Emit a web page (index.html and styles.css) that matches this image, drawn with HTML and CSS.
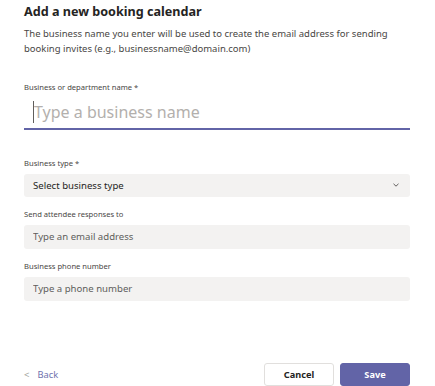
FILE: index.html
```html
<!DOCTYPE html>
<html lang="en">

<head>
  <meta charset="UTF-8">
  <meta name="viewport" content="width=device-width, initial-scale=1.0">
  <title>Add a new booking calendar</title>
  <link rel="stylesheet" href="styles.css">
</head>

<body>
  <div class="dialog">
    <header>
      <h1>Add a new booking calendar</h1>
      <p class="intro">The business name you enter will be used to create the email address for sending booking invites (e.g., businessname@domain.com)</p>
    </header>
    <main>
      <div class="field field-name">
        <label for="business-name">Business or department name *</label>
        <div class="name-input">
          <span class="caret"></span>
          <input id="business-name" type="text" placeholder="Type a business name">
        </div>
      </div>
      <div class="field">
        <label for="business-type">Business type *</label>
        <div class="box select">
          <span>Select business type</span>
          <svg width="6" height="4" viewBox="0 0 6 4"><path d="M0.5 0.8l2.5 2.4 2.5-2.4" fill="none" stroke="#605e5c" stroke-width="1"/></svg>
        </div>
      </div>
      <div class="field">
        <label for="email">Send attendee responses to</label>
        <input class="box" id="email" type="text" placeholder="Type an email address">
      </div>
      <div class="field">
        <label for="phone">Business phone number</label>
        <input class="box" id="phone" type="text" placeholder="Type a phone number">
      </div>
    </main>
    <footer>
      <a class="back" href="#"><span class="chev">&lt;</span>Back</a>
      <div class="actions">
        <button class="cancel">Cancel</button>
        <button class="save">Save</button>
      </div>
    </footer>
  </div>
</body>

</html>
```

FILE: styles.css
```css
html, body {
  margin: 0;
  height: 100%;
  overflow: hidden;
}

body {
  font-family: "Segoe UI", "Noto Sans", "Open Sans", sans-serif;
  color: #252423;
  background: #fff;
}

.dialog {
  display: flex;
  flex-direction: column;
  height: 386px;
  padding: 0 25px 0 24px;
  box-sizing: border-box;
}

h1 {
  font-size: 12.6px;
  font-weight: 700;
  line-height: 18px;
  margin: 3px 0 0;
}

.intro {
  font-size: 9.5px;
  line-height: 15px;
  color: #484644;
  margin: 4.5px 0 0;
}

.field {
  display: flex;
  flex-direction: column;
}

.field label {
  font-size: 7.6px;
  line-height: 12px;
  color: #484644;
  margin-bottom: 5px;
}

.field-name {
  margin-top: 25px;
}

.name-input {
  display: flex;
  align-items: center;
  border-bottom: 2px solid #6264a7;
  padding: 0 0 1px 9px;
  height: 29px;
}

.caret {
  width: 1px;
  height: 22px;
  background: #605e5c;
}

.name-input input {
  flex: 1;
  border: none;
  outline: none;
  font: inherit;
  font-size: 16px;
  padding: 0;
  background: transparent;
  color: #252423;
}

.name-input input::placeholder {
  color: #b3b0ad;
}

.field + .field {
  margin-top: 11px;
}

.field-name + .field {
  margin-top: 27px;
}

.box {
  height: 24px;
  box-sizing: border-box;
  background: #f3f2f1;
  border: none;
  border-radius: 3px;
  padding: 0 11px 0 9px;
  font: inherit;
  font-size: 9.6px;
  color: #252423;
  outline: none;
}

.box::placeholder {
  color: #605e5c;
}

.select {
  height: 23px;
  display: flex;
  align-items: center;
  justify-content: space-between;
}

footer {
  margin-top: auto;
  display: flex;
  align-items: center;
  justify-content: space-between;
}

.back {
  font-size: 9.3px;
  color: #7072ae;
  text-decoration: none;
  display: flex;
  align-items: center;
}

.back .chev {
  color: #a19f9d;
  margin-right: 8px;
  font-size: 9.5px;
}

.actions {
  display: flex;
  gap: 6px;
}

.actions button {
  width: 70px;
  height: 23px;
  font: inherit;
  font-size: 9.2px;
  font-weight: 700;
  border-radius: 3px;
  padding: 0;
}

.cancel {
  background: #fff;
  border: 1px solid #e1dfdd;
  color: #252423;
}

.save {
  background: #6264a7;
  border: 1px solid #6264a7;
  color: #fff;
}
```
